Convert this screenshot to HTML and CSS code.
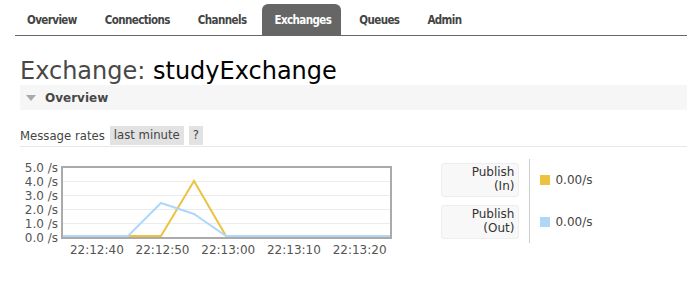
FILE: index.html
```html
<!DOCTYPE html>
<html lang="en">

<head>
    <meta charset="UTF-8">
    <title>Exchange: studyExchange</title>
    <link rel="stylesheet" href="styles.css">
</head>

<body>

    <ul class="tabs">
        <li><a href="#">Overview</a></li>
        <li><a href="#">Connections</a></li>
        <li><a href="#">Channels</a></li>
        <li class="selected"><a href="#">Exchanges</a></li>
        <li><a href="#">Queues</a></li>
        <li><a href="#">Admin</a></li>
    </ul>

    <div class="main">
        <h1>Exchange: <b>studyExchange</b></h1>

        <div class="section">
            <h2><span class="arrow"></span>Overview</h2>

            <div class="rates-bar">
                <span>Message rates</span>
                <span class="pill">last minute</span>
                <span class="pill">?</span>
            </div>

            <div class="chart-row">
                <div class="chart">
                    <div class="y-labels">
                        <span>5.0 /s</span>
                        <span>4.0 /s</span>
                        <span>3.0 /s</span>
                        <span>2.0 /s</span>
                        <span>1.0 /s</span>
                        <span>0.0 /s</span>
                    </div>
                    <div class="plot-wrap">
                        <svg class="plot" width="327" height="69" viewBox="0 0 327 69">
                            <g stroke="#ececec" stroke-width="1">
                                <line x1="0" y1="13.5" x2="327" y2="13.5" />
                                <line x1="0" y1="27.5" x2="327" y2="27.5" />
                                <line x1="0" y1="41.5" x2="327" y2="41.5" />
                                <line x1="0" y1="55.5" x2="327" y2="55.5" />
                            </g>
                            <polyline fill="none" stroke="#edc240" stroke-width="2"
                                points="0,68 65,68 98,68 131,13 163,68 327,68" />
                            <polyline fill="none" stroke="#afd8f8" stroke-width="2"
                                points="0,68 65,68 98,35 131,46 163,68 327,68" />
                        </svg>
                        <div class="x-labels">
                            <span>22:12:40</span>
                            <span>22:12:50</span>
                            <span>22:13:00</span>
                            <span>22:13:10</span>
                            <span>22:13:20</span>
                        </div>
                    </div>
                </div>

                <div class="legend">
                    <div class="legend-label">Publish<br>(In)</div>
                    <div class="legend-label">Publish<br>(Out)</div>
                </div>
                <div class="legend-values">
                    <div class="value"><span class="swatch in"></span>0.00/s</div>
                    <div class="value"><span class="swatch out"></span>0.00/s</div>
                </div>
            </div>
        </div>
    </div>

</body>

</html>
```

FILE: styles.css
```css
body {
    margin: 0;
    font-family: "DejaVu Sans", Verdana, sans-serif;
    font-size: 12px;
    color: #444;
    background: #fff;
}

.tabs {
    list-style: none;
    margin: 4px 0 0 15px;
    padding: 0;
    display: flex;
    border-bottom: 1px solid #666;
}

.tabs li a {
    display: block;
    padding: 9px 10px 0 12px;
    height: 22px;
    font-family: "DejaVu Sans Condensed", "DejaVu Sans", sans-serif;
    font-weight: bold;
    font-size: 11.5px;
    letter-spacing: -0.6px;
    color: #444;
    text-decoration: none;
    border-radius: 6px 6px 0 0;
}

.tabs li + li {
    margin-left: 6px;
}

.tabs li.selected a {
    background-color: #666;
    color: #fff;
}

.main {
    padding: 0 0 0 20px;
}

h1 {
    margin: 22px 0 0 0;
    font-size: 24px;
    font-weight: normal;
    color: #484848;
    line-height: 27px;
}

h1 b {
    font-weight: normal;
    color: #000;
}

h2 {
    margin: 0;
    height: 25px;
    display: flex;
    align-items: center;
    background-color: #f6f6f6;
    font-size: 12px;
    font-weight: bold;
    color: #484848;
}

.arrow {
    width: 0;
    height: 0;
    margin: 0 9px 0 6px;
    border-left: 5px solid transparent;
    border-right: 5px solid transparent;
    border-top: 6px solid #aaa;
}

.rates-bar {
    margin-top: 16px;
    height: 19px;
    padding-bottom: 1px;
    display: flex;
    align-items: center;
    gap: 5px;
    border-bottom: 1px solid #e8e8e8;
    font-size: 11.7px;
}

.pill {
    background-color: #e2e2e2;
    padding: 2px 4px 3px 4px;
    color: #444;
}

.chart-row {
    display: flex;
    align-items: flex-start;
    margin-top: 19px;
}

.chart {
    display: flex;
}

.y-labels {
    display: flex;
    flex-direction: column;
    align-items: flex-end;
    margin: -5px 0 0 -20px;
    width: 58px;
    padding-right: 3px;
    color: #545454;
}

.y-labels span {
    height: 14px;
    line-height: 14px;
}

.plot-wrap {
    display: flex;
    flex-direction: column;
}

.plot {
    display: block;
    border: 2px solid #aaa;
}

.x-labels {
    display: flex;
    padding-left: 3px;
    margin-top: 4px;
    color: #545454;
}

.x-labels span {
    width: 65.7px;
    text-align: center;
}

.legend {
    margin: -7px 0 0 49px;
    display: flex;
    flex-direction: column;
    gap: 8px;
    padding: 4px 10px 4px 0;
    border-right: 1px solid #ccc;
}

.legend-label {
    width: 68px;
    height: 30px;
    padding: 1px 4px;
    text-align: right;
    line-height: 14px;
    background-color: #f8f8f8;
    border: 1px solid #eee;
    border-radius: 3px;
    color: #333;
}

.legend-values {
    display: flex;
    flex-direction: column;
    margin-top: -7px;
    padding-left: 10px;
}

.value {
    display: flex;
    align-items: center;
    height: 42px;
    color: #444;
}

.swatch {
    display: inline-block;
    width: 10px;
    height: 10px;
    margin-right: 5px;
}

.swatch.in {
    background-color: #edc240;
}

.swatch.out {
    background-color: #afd8f8;
}
```
